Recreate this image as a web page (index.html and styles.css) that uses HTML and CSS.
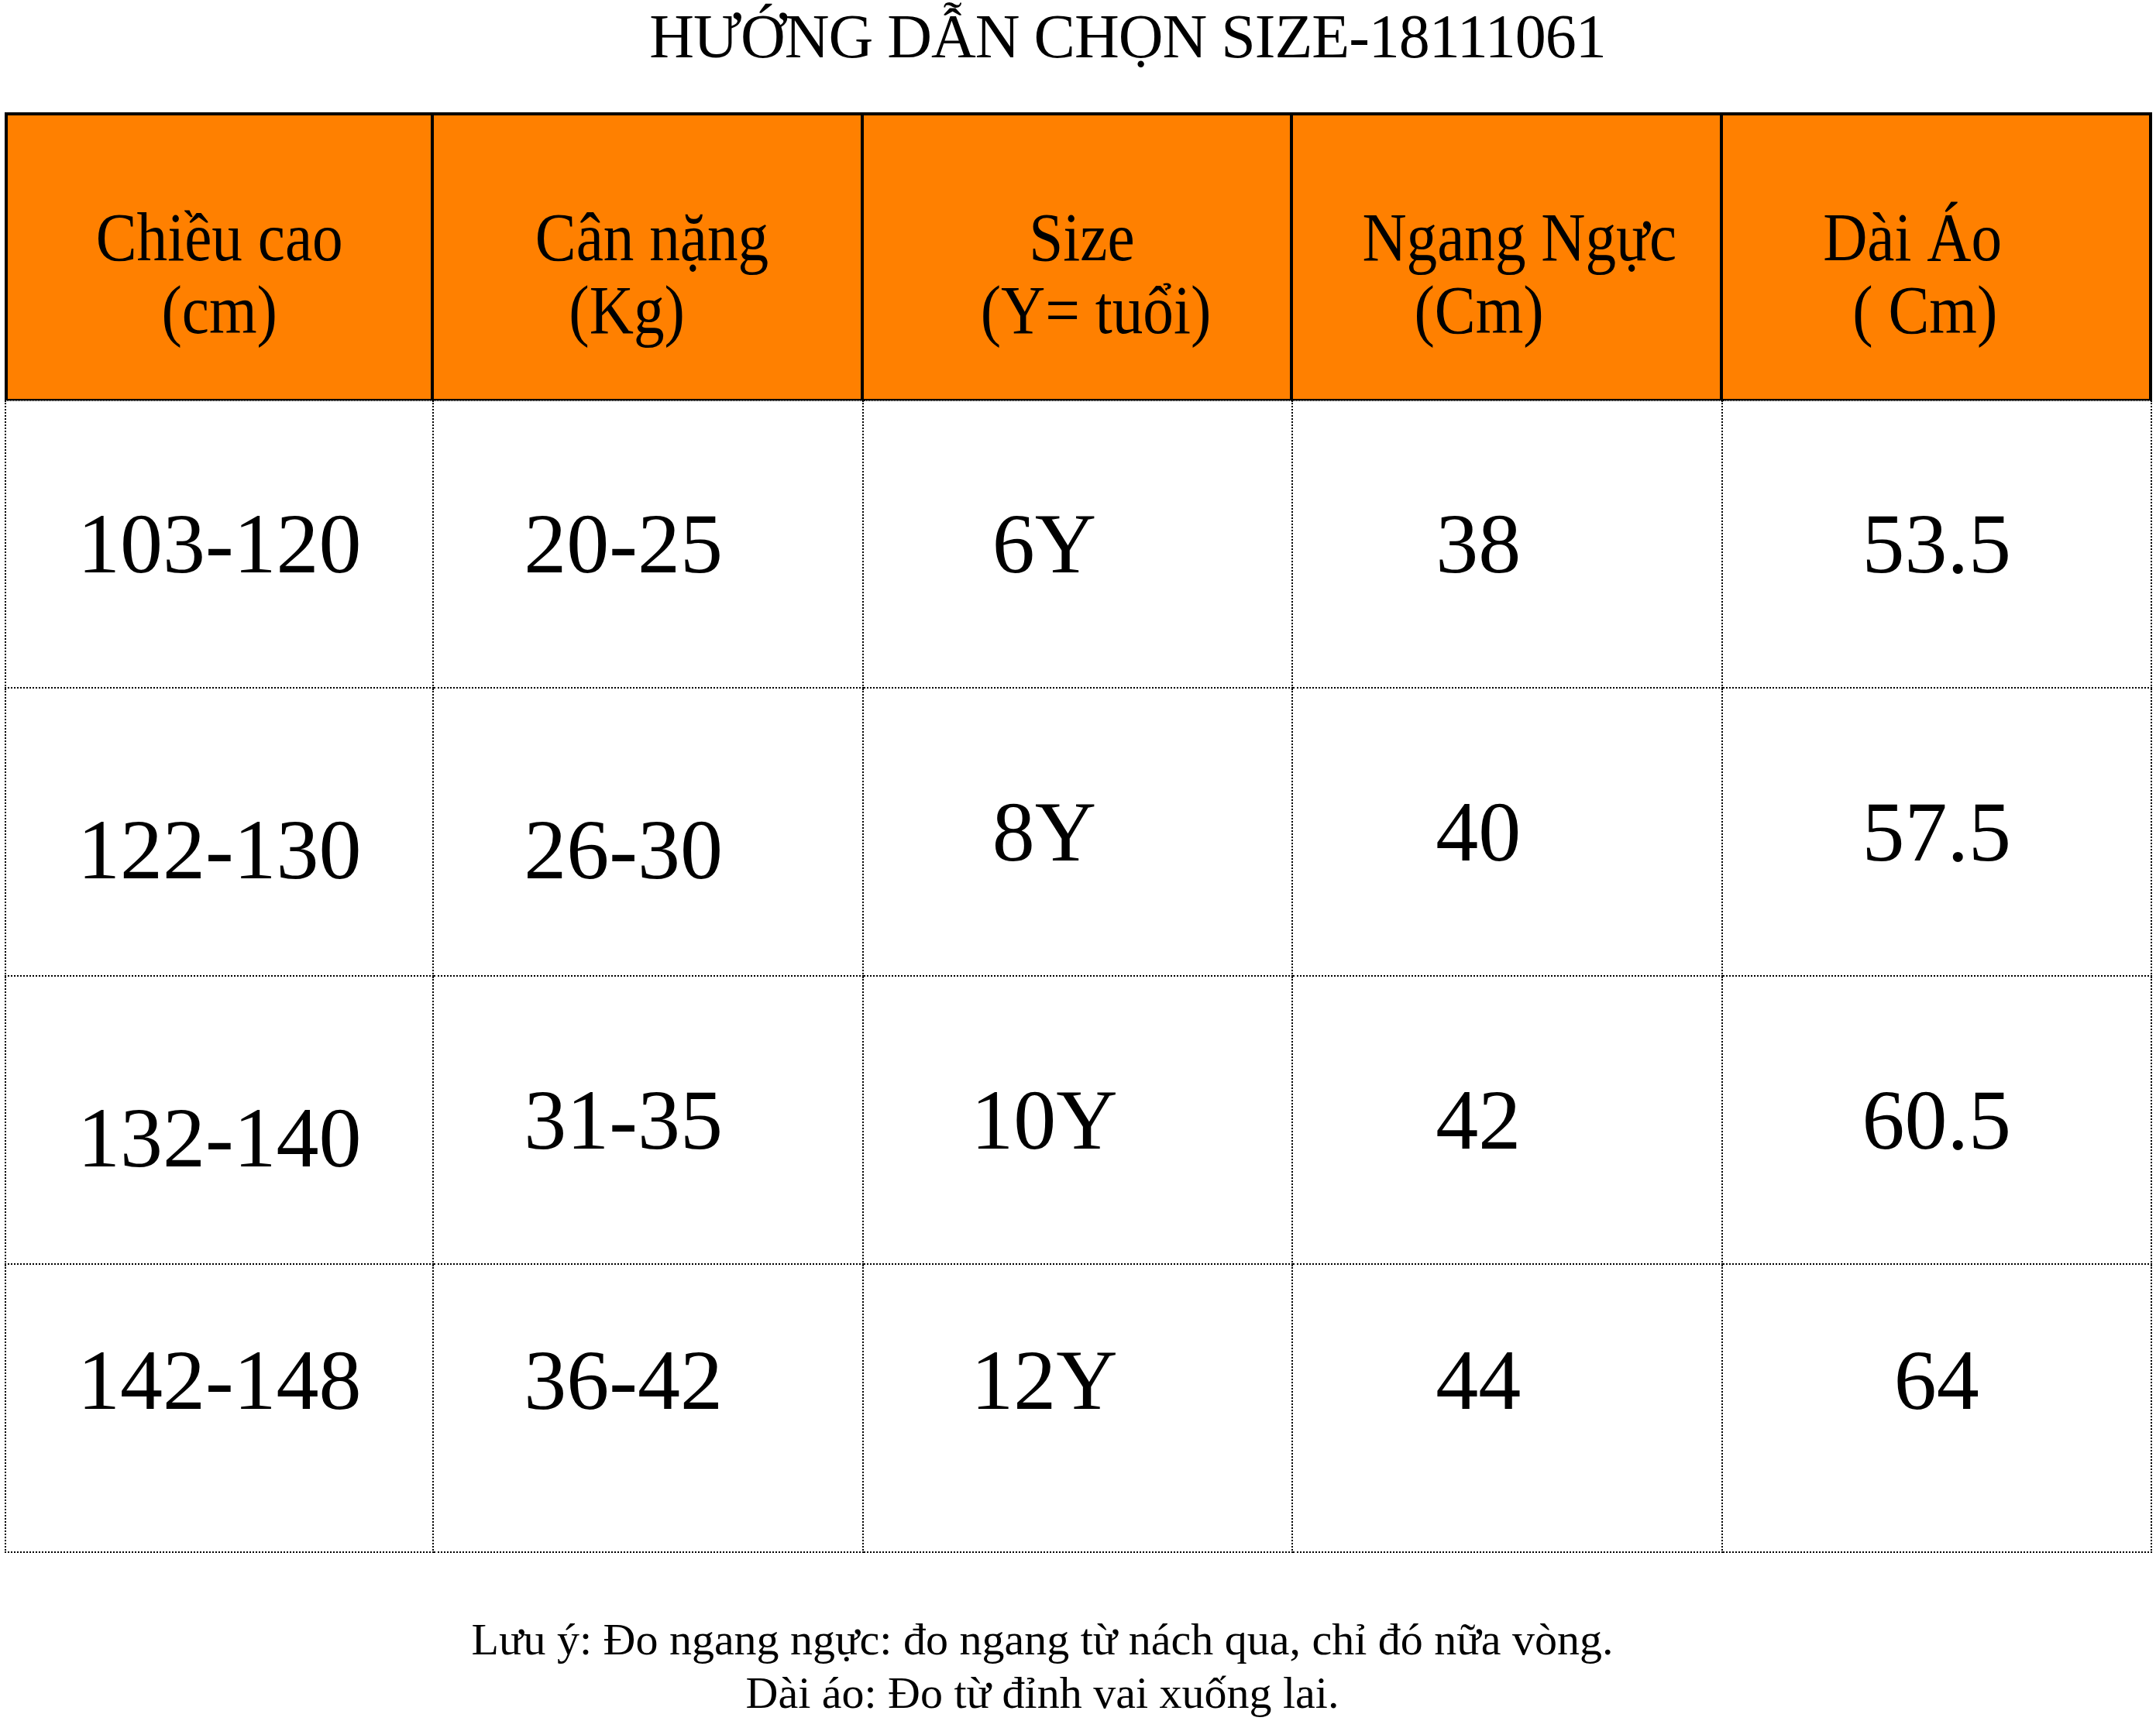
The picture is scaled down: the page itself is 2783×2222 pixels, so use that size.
FILE: index.html
```html
<!DOCTYPE html>
<html lang="vi">
<head>
  <meta charset="UTF-8">
  <meta name="viewport" content="width=device-width, initial-scale=1.0">
  <title>Hướng dẫn chọn size</title>
  <link rel="stylesheet" href="styles.css">
</head>
<body>
  <h1 class="title">HƯỚNG DẪN CHỌN SIZE-18111061</h1>

  <table class="size-table">
    <thead>
      <tr>
        <th><span class="line">Chiều cao</span><span class="line">(cm)</span></th>
        <th><span class="line right-7">Cân nặng</span><span class="line left-29">(Kg)</span></th>
        <th><span class="line right-7">Size</span><span class="line right-27">(Y= tuổi)</span></th>
        <th><span class="line right-19">Ngang Ngực</span><span class="line left-39">(Cm)</span></th>
        <th><span class="line left-34">Dài Áo</span><span class="line left-16">( Cm)</span></th>
      </tr>
    </thead>
    <tbody>
      <tr class="first-row">
        <td>103-120</td>
        <td class="col-2">20-25</td>
        <td class="col-3">6Y</td>
        <td class="col-4">38</td>
        <td>53.5</td>
      </tr>
      <tr>
        <td class="low">122-130</td>
        <td class="col-2 low">26-30</td>
        <td class="col-3">8Y</td>
        <td class="col-4">40</td>
        <td>57.5</td>
      </tr>
      <tr>
        <td class="low">132-140</td>
        <td class="col-2">31-35</td>
        <td class="col-3">10Y</td>
        <td class="col-4">42</td>
        <td>60.5</td>
      </tr>
      <tr class="row-up">
        <td>142-148</td>
        <td class="col-2">36-42</td>
        <td class="col-3">12Y</td>
        <td class="col-4">44</td>
        <td>64</td>
      </tr>
    </tbody>
  </table>

  <div class="note">
    <p>Lưu ý: Đo ngang ngực: đo ngang từ nách qua, chỉ đó nữa vòng.</p>
    <p>Dài áo: Đo từ đỉnh vai xuống lai.</p>
  </div>
</body>
</html>
```

FILE: styles.css
```css
body {
  margin: 0;
  font-family: "Liberation Serif", "Times New Roman", serif;
  color: #000;
  background: #fff;
}

.title {
  margin: 5px 0 56px;
  padding-left: 128px;
  text-align: center;
  font-size: 80px;
  line-height: 84px;
  font-weight: normal;
  letter-spacing: -1px;
}

.size-table {
  margin-left: 6px;
  width: 2772px;
  table-layout: fixed;
  border-collapse: separate;
  border-spacing: 0;
}

.size-table th,
.size-table td {
  box-sizing: border-box;
  height: 372px;
  text-align: center;
  vertical-align: middle;
  padding: 0;
}

/* header */
.size-table th {
  background-color: #ff8000;
  font-size: 88px;
  line-height: 94px;
  font-weight: normal;
  padding-top: 44px;
  border-top: 4px solid #000;
  border-right: 4px solid #000;
  border-bottom: 2px solid #000;
}
.size-table th:first-child {
  border-left: 4px solid #000;
}
.line {
  display: block;
  white-space: nowrap;
  transform: scaleX(0.9);
}
.right-7 { padding-left: 14px; }
.right-19 { padding-left: 38px; }
.right-27 { padding-left: 54px; }
.left-16 { padding-right: 32px; }
.left-29 { padding-right: 58px; }
.left-34 { padding-right: 68px; }
.left-39 { padding-right: 78px; }

/* body */
.size-table td {
  font-size: 110px;
  border-right: 2px dotted #000;
  border-bottom: 2px dotted #000;
}
.size-table td:first-child {
  border-left: 2px dotted #000;
}
.size-table .first-row td {
  border-top: 1px dotted #000;
}
.size-table td.col-2 { padding-right: 64px; }
.size-table td.col-3 { padding-right: 86px; }
.size-table td.col-4 { padding-right: 74px; }
.size-table td.low { padding-top: 46px; }
.size-table .row-up td { padding-bottom: 72px; }

/* note */
.note {
  margin-top: 77px;
  padding-right: 92px;
  text-align: center;
  font-size: 58px;
  line-height: 69px;
}
.note p {
  margin: 0;
}
```
